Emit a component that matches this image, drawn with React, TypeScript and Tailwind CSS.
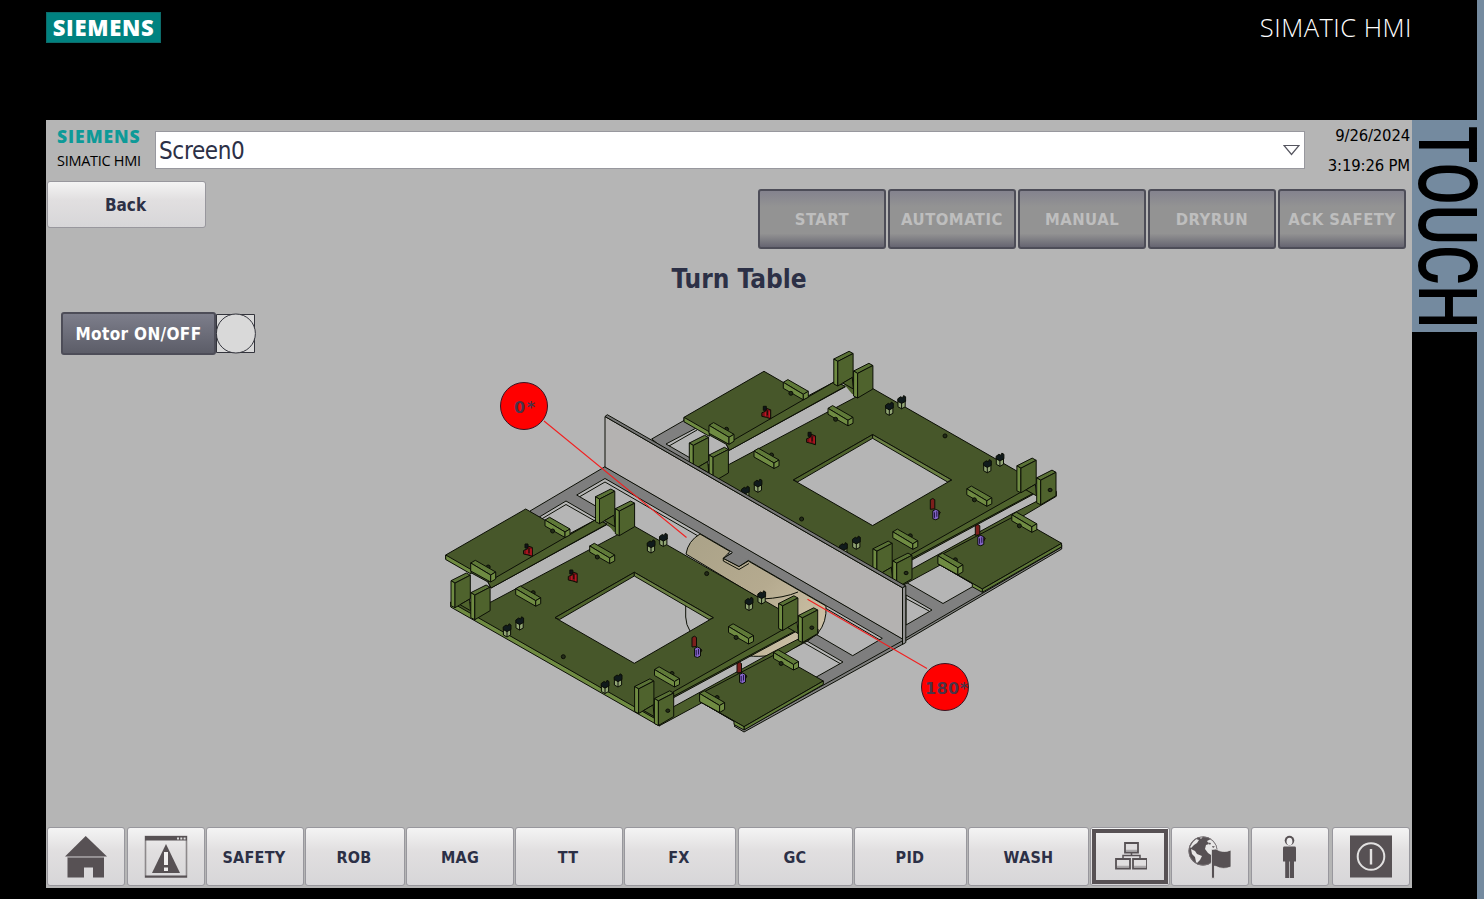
import React from "react";

const INK = "#0c0f06";
const TOP = "#47572a";
const SIDE = "#6f8b42";
const FACE = "#4f632d";
const FLOOR = "#b5b5b5";

type Pt = { x: number; y: number };

function Upright({ x, y, dot }: Pt & { dot?: boolean }) {
  return (
    <g transform={`translate(${x} ${y})`}>
      <path d="M0 0 15.3-7.7 19.3-5.5 4 2.4Z" fill="#5a7236" />
      <path d="M0 0 4 2.4V27L0 25Z" fill={SIDE} />
      <path d="M4 2.4 19.3-5.5V18L4 27Z" fill={FACE} />
      {dot && <ellipse cx="13.4" cy="12.2" rx="2" ry="1.7" fill="#222b18" />}
    </g>
  );
}

function Bracket({ x, y, dot }: Pt & { dot?: boolean }) {
  return (
    <g>
      <Upright x={x} y={y} />
      <path d={`M${x + 9} ${y + 24} ${x + 18.5} ${y + 18.5} ${x + 19.5} ${y + 30}Z`} fill={FACE} />
      <Upright x={x + 19.8} y={y + 12} dot={dot} />
    </g>
  );
}

function Block({ x, y, tall, front }: Pt & { tall?: boolean; front?: boolean }) {
  return (
    <g transform={`translate(${x} ${y})`}>
      {!front && <circle cx="17.5" cy="4" r="2" fill="#222b18" />}
      <path d="M0 0 4.6-2.7 25 9 20 12Z" fill="#5f7938" />
      <path d={tall ? "M0 0 20 12V19L0 8Z" : "M0 0 20 12V17.5L0 6Z"} fill={SIDE} />
      <path d={tall ? "M20 12 25 9V16L20 19Z" : "M20 12 25 9V15L20 17.5Z"} fill={SIDE} />
      {front && <circle cx="7.6" cy="11" r="2" fill="#222b18" />}
    </g>
  );
}

function Pin({ x, y }: Pt) {
  return (
    <g transform={`translate(${x} ${y})`}>
      <path d="M-3.6-1 0 1 3.6-1V5L0 7-3.6 5Z" fill="#91a574" />
      <path d="M0 1V7" />
      <path d="M-3.8-3-1-5 1-4 2-6.2 4-5V-.5L0 1.6-3.8-.5Z" fill="#101a1c" />
    </g>
  );
}

function RedClip({ x, y }: Pt) {
  return (
    <g transform={`translate(${x} ${y})`}>
      <path d="M-4.5-.5-1-2 0-5 4.4-3.5V5.5L0 4-4.5 3Z" fill="#7a0f16" />
      <path d="M-3-7H0V-3H-3Z" fill="#10131c" />
      <path d="M-1-1V3M3-2V4" stroke="#d01c28" />
      <path d="M1-3V2" />
    </g>
  );
}

function PurpleClip({ x, y }: Pt) {
  return (
    <g transform={`translate(${x} ${y})`}>
      <path d="M-2.5-6 0-7.3 2-6V3L-2.5 3.5Z" fill="#7c1f1c" />
      <path d="M5 5 7.5 6.5 5 11Z" fill="#6b2220" />
      <path d="M0 5 3 3.5 6 5V12.5L3 14 0 13Z" fill="#8263c4" />
      <path d="M1.7 6.5V12M4 5.5V11" stroke="#241848" />
    </g>
  );
}

const pins: Pt[] = [
  { x: 663.3, y: 539.5 }, { x: 651, y: 546 },
  { x: 519.6, y: 623 }, { x: 507, y: 630 },
  { x: 618, y: 680 }, { x: 605, y: 686.5 },
  { x: 761.6, y: 597 }, { x: 749, y: 603.5 },
];

function Fixture() {
  return (
    <g stroke={INK} strokeWidth="1" strokeLinejoin="round">
      {/* upper wing and its rail */}
      <path d="M445.7 555 525.7 509 569 534 597 519 607 524.5 491 588 488 582 445.7 559Z" fill={TOP} />
      <path d="M445.7 555V559.5L471 574V569.5Z" fill={SIDE} />
      <path d="M488 582 597 519 607 524 491 588Z" fill="#4c5e2c" />
      {/* rails on the lower side */}
      <path d="M674 706.5 773 652 818 629V634L701.5 703 659 726 658 716Z" fill="#4c5e2c" />
      {/* main plate */}
      <path
        fillRule="evenodd"
        d="M634 526 779 609 795 632 673 698 659.3 722 450.7 603 491 602ZM634.3 572.3 555 617.7 634.3 663.3 713.3 617.7Z"
        fill={TOP}
      />
      <path d="M605 521 615 515 635 527 614 532Z" fill={FACE} stroke="none" />
      <path d="M450.7 602V607L659.3 726V721Z" fill={SIDE} />
      <path d="M555 617.7 634.3 572.3V576L559.5 619.5Z" fill={FACE} />
      <path d="M634.3 572.3 713.3 617.7 709 619.5 634.3 576Z" fill="#6b8045" />
      <path d="M673 692 787.7 627 795 631 673 696.5Z" fill={FACE} />
      {/* lower wing */}
      <path d="M700 694 776 654 823.3 681 744 726.7 700 701.7Z" fill={TOP} />
      <path d="M823.3 681V684.5L744 730V726.7Z" fill="#5f7938" />
      <path d="M700 701.5 744 726.7V730L734 724.5V721.5Z" fill={SIDE} />
      <circle cx="563.3" cy="656.7" r="2" fill="#222b18" />
      <circle cx="706.7" cy="573.6" r="2" fill="#222b18" />
      <Block x={545} y={520} front />
      <Block x={589.7} y={546} front />
      <Block x={470.7} y={563} tall />
      <Block x={515.7} y={588.7} />
      <Block x={728.5} y={626.5} front />
      <Block x={654.5} y={669.5} />
      <Block x={773.5} y={652.5} front />
      <Block x={699.6} y={693.5} tall />
      <Bracket x={595.5} y={496.7} />
      <Bracket x={451} y={580.7} />
      <Bracket x={778.6} y={603.5} dot />
      <Bracket x={634.6} y={686.5} dot />
      {pins.map((p) => (
        <Pin key={`${p.x}`} x={p.x} y={p.y} />
      ))}
      <RedClip x={528} y={551} />
      <RedClip x={572.8} y={577} />
      <PurpleClip x={694.5} y={643.5} />
      <PurpleClip x={739.5} y={669.5} />
    </g>
  );
}

function TurnTable() {
  return (
    <svg className="block h-[400px] w-[640px] shrink-0" viewBox="440 340 640 400">
      <defs>
        <linearGradient id="drum" x1="0" y1="0" x2="1" y2=".8">
          <stop offset="0" stopColor="#aaa288" />
          <stop offset=".55" stopColor="#b5aa8f" />
          <stop offset="1" stopColor="#cfc3a8" />
        </linearGradient>
      </defs>
      <g stroke={INK} strokeWidth="1" strokeLinejoin="round">
        <path d="M651.7 439 690 417 700 426 666 444 943 603.5 972 587 1061.7 545V549L905 641Z" fill="#808080" />
        <path d="M905 638.5 1061.7 547" fill="none" />
        <path d="M906 595 932 610 906 625Z" fill={FLOOR} />
        <path d="M669 446 697 430M906 598.5 929 611" fill="none" />
      </g>
      <g transform="translate(238.3 -137.7)">
        <Fixture />
      </g>
      <g stroke={INK} strokeWidth="1" strokeLinejoin="round">
        <path
          fillRule="evenodd"
          d="M530 511 605 466.7 903 639V644L744 732 734 726 748 717 818 676 843 662 566 501 536 519ZM576.7 495 605 478.5 732.7 552.5 723.3 558.3 739 566.5 748.3 560.5 882.3 638.3 852.7 655.7Z"
          fill="#7e7e7e"
        />
        <path d="M580 496.5 605 482 730 554.5M749 563.5 880 640M539 520.5 566 504.5 595 521M800 640.5 840 663.5M744 729.5 903 640.5" fill="none" />
        <path
          d="M686 554Q688 541 700 534L730 551.5 723.3 558.3 739 566.5 748.3 561 826 606Q827 622 818 633 800 650 765 656 752 657 745 655L762 600Z"
          fill="url(#drum)"
        />
        <path d="M762 599Q784 598 798 592M685.7 600V617Q686 625 690 631" fill="none" />
        <path d="M723.3 558.3 732.7 552.5 748.3 560.5 739 566.5Z" fill="#7e7e7e" stroke="none" />
        <path d="M732 553 723.3 558.3 739 566.5 748.3 560.5M723.3 558.3V561L739 569.5 749 563.5" fill="none" />
        <path d="M605 416.5 902.5 587.8V639L605 467Z" fill="#b4b2b1" />
        <path d="M605 416.5 607.3 414.7 905.8 586 902.5 587.8Z" fill="#777" />
        <path d="M902.5 587.8 905.8 586V642.5L902.5 644.5Z" fill="#929292" />
      </g>
      <Fixture />
      <g stroke="#f22020" strokeWidth="1.1">
        <path d="M544 421 686.5 537.5M807.5 599.3 927 668.5" />
      </g>
      <g fill="#ff0000" stroke="#3a1522" strokeWidth="1">
        <circle cx="524" cy="406" r="23.5" />
        <circle cx="945" cy="687" r="23.5" />
      </g>
      <g fill="#4b3347" className="font-['DejaVu_Sans'] text-[16px] font-bold" textAnchor="middle">
        <text x="524.5" y="412.5" textLength="21">0*</text>
        <text x="946.5" y="693.5" textLength="43">180*</text>
      </g>
    </svg>
  );
}

const icon = "block shrink-0";

function HomeIcon() {
  return (
    <svg className={icon} width="44" height="44" viewBox="0 0 44 44" fill="#575154">
      <path d="M21.7 1 43 21.5H1Z" />
      <path d="M3.5 22.5H40V42.5H29V32.5H20V42.5H3.5Z" />
      <path d="M3.5 22.2H40" stroke="#8f8b8d" />
    </svg>
  );
}

function AlarmIcon() {
  return (
    <svg className={icon} width="44" height="44" viewBox="0 0 44 44" fill="#575154">
      <path d="M1.5 1.5H42.5V42H1.5Z" fill="none" stroke="#8d898b" strokeWidth="1.6" />
      <path d="M1 1H43V5.5H1ZM1 40.5H43V42.5H1Z" />
      <path d="M33 3.5H42" stroke="#ddd" strokeWidth="2" strokeDasharray="2 1.3" />
      <path d="M22 9 36 38H8Z" />
      <path d="M20 17H24V30H20ZM20 32.5H24V36H20Z" fill="#f0efef" />
    </svg>
  );
}

function NetworkIcon() {
  return (
    <svg className={icon} width="34" height="30" viewBox="0 0 34 30" fill="none" stroke="#575154" strokeWidth="1.8">
      <path d="M12 1H25V10.5H12Z" fill="#e0dedf" />
      <path d="M3 17H17V26.5H3Z" fill="#e0dedf" />
      <path d="M20 17H34V26.5H20Z" fill="#e0dedf" />
      <path d="M18.5 11V14M10 17V13.6H27V17" strokeWidth="1.5" />
      <path d="M13 8.6H24M4 24.6H16M21 24.6H33" stroke="#aaa7a9" strokeWidth="1.8" />
    </svg>
  );
}

function LanguageIcon() {
  return (
    <svg className={icon} width="46" height="44" viewBox="0 0 46 44" fill="#575154">
      <circle cx="16" cy="16" r="14.4" />
      <g fill="#e8e7e7">
        <path d="M6 7 9 4 12 5 10 8 7 10 4 13 3 12Z" />
        <path d="M4 14 8 16 10 19 15 21 13 25 10 28 9 27 8 22 5 19Z" />
        <path d="M20 6 24 4 28 8 30 13 28 17 25 15 24 20 21 18 18 14 19 10 22 9Z" />
        <path d="M12 2 16 1.6 14 4Z" />
      </g>
      <path d="M21 7.5 24 8 23 10ZM25 11 28 11.5 26 13Z" />
      <circle cx="16" cy="16" r="14.2" fill="none" stroke="#777275" strokeWidth=".9" />
      <path d="M24.5 14.5 29 14Q36 18.5 44 15V32Q36 35 29 31.5L27.5 31V43.2H24.5Z" stroke="#e3e2e2" strokeWidth=".8" />
    </svg>
  );
}

function PersonIcon() {
  return (
    <svg className={icon} width="16" height="44" viewBox="0 0 16 44" fill="#575154">
      <circle cx="7.5" cy="5.6" r="4.8" />
      <ellipse cx="7.5" cy="6.5" rx="2.9" ry="3.8" fill="#eeedee" />
      <path d="M2 11.5H13Q14 11.5 14 13.5V26.5H1V13.5Q1 11.5 2 11.5Z" />
      <path d="M3.2 26H7.2V43H3.2ZM7.9 26H12V43H7.9Z" />
    </svg>
  );
}

function PowerIcon() {
  return (
    <svg className={icon} width="43" height="43" viewBox="0 0 43 43">
      <path d="M0 .5H42V42.5H0Z" fill="#575154" />
      <circle cx="21" cy="21.5" r="13.3" fill="none" stroke="#e2e1e1" strokeWidth="2" />
      <path d="M21 14V29.5" stroke="#e2e1e1" strokeWidth="2.4" />
    </svg>
  );
}

const navItems: { id: string; cls: string; body: React.ReactNode }[] = [
  { id: "home", cls: "w-[78px]", body: <HomeIcon /> },
  { id: "alarm", cls: "ml-[2px] w-[78px]", body: <AlarmIcon /> },
  { id: "safety", cls: "ml-px w-[98px] pt-[2px] pr-[2px]", body: "SAFETY" },
  { id: "rob", cls: "ml-px w-[100px] pt-[2px] pr-[2px]", body: "ROB" },
  { id: "mag", cls: "ml-px w-[108px] pt-[2px]", body: "MAG" },
  { id: "tt", cls: "ml-px w-[108px] pt-[2px] pr-[2px]", body: "TT" },
  { id: "fx", cls: "ml-px w-[112px] pt-[2px] pr-[2px]", body: "FX" },
  { id: "gc", cls: "ml-[2px] w-[115px] pt-[2px] pr-[1px]", body: "GC" },
  { id: "pid", cls: "ml-px w-[113px] pt-[2px] pr-[1px]", body: "PID" },
  { id: "wash", cls: "ml-px w-[121px] pt-[2px]", body: "WASH" },
  { id: "network", cls: "ml-px w-[80px]", body: <NetworkIcon /> },
  { id: "language", cls: "ml-[1px] w-[78px]", body: <LanguageIcon /> },
  { id: "user", cls: "ml-[2px] w-[78px]", body: <PersonIcon /> },
  { id: "power", cls: "ml-[3px] w-[78px]", body: <PowerIcon /> },
];

const modes = ["START", "AUTOMATIC", "MANUAL", "DRYRUN", "ACK SAFETY"];

const lightButton =
  "flex shrink-0 items-center justify-center rounded-[3px] border border-[#98979d] bg-linear-to-b from-[#f4f4f4] via-[#e1dfe0] via-40% to-[#d7d6d8] font-bold text-[#2c3046]";

export default function App() {
  return (
    <div className="flex h-[899px] w-[1484px] overflow-hidden bg-black font-['DejaVu_Sans_Condensed','DejaVu_Sans',sans-serif] whitespace-nowrap">
      <div className="flex w-[1412px] shrink-0 flex-col pl-[46px]">
        <header className="flex h-[120px] shrink-0 items-start justify-between pt-3">
          <div className="flex h-[31px] w-[115px] items-center justify-center border border-[#0d6b6a] bg-[#008280] pb-px font-['Open_Sans',sans-serif] text-[22px] font-extrabold tracking-[0.7px] text-white">
            SIEMENS
          </div>
          <div className="font-['Open_Sans',sans-serif] text-[25.5px] leading-[30px] font-light tracking-[0.5px] text-white">
            SIMATIC HMI
          </div>
        </header>

        <main className="flex h-[768px] flex-col bg-[#b5b5b5]">
          <div className="flex h-[61px] shrink-0">
            <div className="w-[109px] shrink-0 pt-[7px] pl-[11px] font-['Open_Sans',sans-serif]">
              <div className="text-[17.5px] leading-[18px] font-extrabold tracking-[0.95px] text-[#0e9a98]">SIEMENS</div>
              <div className="mt-[7px] text-[14.5px] leading-[18px] tracking-[-0.3px] text-black">SIMATIC HMI</div>
            </div>
            <div className="mt-[11px] flex h-[38px] w-[1150px] shrink-0 items-center justify-between border border-[#98989e] bg-white pr-1 pl-[3px] text-[24px] tracking-[-0.35px] text-[#2c3046]">
              <span className="pt-px">Screen0</span>
              <svg width="17" height="12" viewBox="0 0 17 12" fill="none" stroke="#55555f" strokeWidth="1.2">
                <path d="M1 1.5H16L8.5 10.5Z" />
              </svg>
            </div>
            <div className="w-[105px] shrink-0 pt-px text-right text-[16.5px] leading-[30px] tracking-[-0.15px] text-black">
              <div>9/26/2024</div>
              <div>3:19:26 PM</div>
            </div>
          </div>

          <div className="flex h-[68px] shrink-0 items-start justify-between pr-[6px] pl-px">
            <button className={`${lightButton} h-[47px] w-[159px] pt-[2px] pr-[2px] text-[17px]`}>Back</button>
            <div className="mt-2 flex gap-[2px]">
              {modes.map((m) => (
                <button
                  key={m}
                  className="flex h-[60px] w-[128px] items-center justify-center rounded-[3px] border-2 border-[#4d4d58] bg-[linear-gradient(to_bottom,#84838e_0%,#939393_28%,#939393_76%,#666571_100%)] pt-[2px] text-[16.5px] font-bold tracking-[0.5px] text-[#bebebe]"
                >
                  {m}
                </button>
              ))}
            </div>
          </div>

          <h1 className="h-[63px] shrink-0 pt-[12px] pl-[20px] text-center text-[26px] leading-[36px] font-bold text-[#2c3046]">
            Turn Table
          </h1>

          <section className="flex min-h-0 flex-1 items-start pl-[15px]">
            <div className="flex shrink-0 items-start">
              <button className="flex h-[43px] w-[155px] items-center justify-center rounded-[3px] border-2 border-[#4d4d58] bg-linear-to-b from-[#7d7e8b] to-[#5c5d68] pt-[2px] text-[17px] font-bold tracking-[0.35px] text-white">
                Motor ON/OFF
              </button>
              <svg className="mt-px block" width="42" height="42" viewBox="0 0 42 42" fill="#d9d9d9" stroke="#33343c">
                <path d="M.5 1.5H38.5V39.5H.5Z" />
                <circle cx="19.9" cy="20.5" r="19.5" />
              </svg>
            </div>
            <div className="mt-[28px] ml-[182px] shrink-0">
              <TurnTable />
            </div>
          </section>

          <nav className="flex h-[61px] shrink-0 pl-px text-[16px] tracking-[0.3px]">
            {navItems.map((n) =>
              n.id === "network" ? (
                <button key={n.id} className={`${lightButton} ${n.cls} h-[59px] p-px`}>
                  <span className="flex h-full w-full items-center justify-center border-4 border-[#575154]">{n.body}</span>
                </button>
              ) : (
                <button key={n.id} className={`${lightButton} ${n.cls} h-[59px]`}>
                  {n.body}
                </button>
              ),
            )}
          </nav>
        </main>
      </div>

      <aside className="flex w-[72px] shrink-0 flex-col bg-[linear-gradient(to_right,#000_65px,#748a9f_65px)] pt-[120px]">
        <div className="flex h-[212px] items-start justify-center bg-[#748a9f] pr-[3px]">
          <div className="mt-[5.5px] scale-x-[1.32] font-['Roboto',sans-serif] text-[61.4px] leading-[53px] font-medium text-black [writing-mode:vertical-rl]">
            TOUCH
          </div>
        </div>
      </aside>
    </div>
  );
}
